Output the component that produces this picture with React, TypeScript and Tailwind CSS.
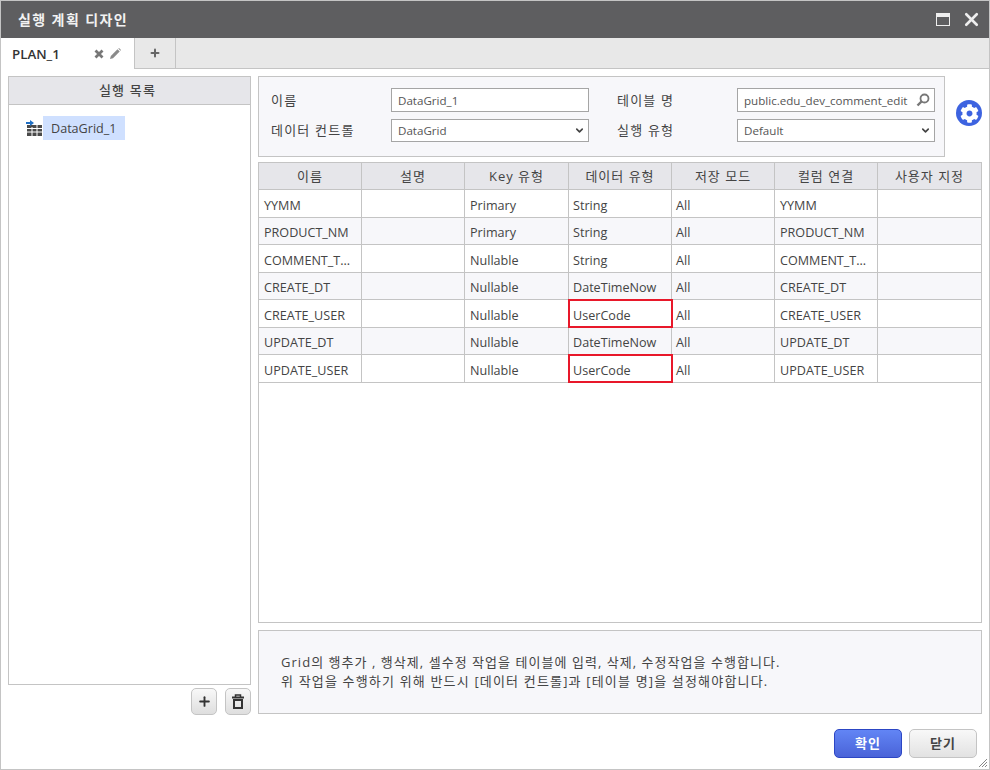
import React from "react";
import { Plus, X, ChevronDown } from "lucide-react";
import { FaCog } from "react-icons/fa";

const FONT = "font-['Open_Sans','Noto_Sans_CJK_KR',sans-serif]";

const columns = ["이름", "설명", "Key 유형", "데이터 유형", "저장 모드", "컬럼 연결", "사용자 지정"];

const rows = [
  { name: "YYMM", key: "Primary", type: "String", col: "YYMM" },
  { name: "PRODUCT_NM", key: "Primary", type: "String", col: "PRODUCT_NM" },
  { name: "COMMENT_T...", key: "Nullable", type: "String", col: "COMMENT_T..." },
  { name: "CREATE_DT", key: "Nullable", type: "DateTimeNow", col: "CREATE_DT" },
  { name: "CREATE_USER", key: "Nullable", type: "UserCode", col: "CREATE_USER", mark: true },
  { name: "UPDATE_DT", key: "Nullable", type: "DateTimeNow", col: "UPDATE_DT" },
  { name: "UPDATE_USER", key: "Nullable", type: "UserCode", col: "UPDATE_USER", mark: true },
];

const GridIcon = () => (
  <svg width="17" height="16" viewBox="0 0 17 16" className="shrink-0">
    <rect x="1" y="5" width="15" height="11" fill="#4a4a4a" />
    <path d="M1 8.500h15M1 12h15M6 7v9M11 5v11" stroke="#fff" strokeWidth="1" />
    <path d="M0 3h5" stroke="#1f6fc4" strokeWidth="2" />
    <path d="M4 0l4 3-4 3z" fill="#1f6fc4" />
  </svg>
);

// 돋보기: lens upper right, handle lower left
const LensIcon = () => (
  <svg width="14" height="14" viewBox="0 0 14 14" fill="none" className="shrink-0">
    <circle cx="8.500" cy="5.500" r="4" stroke="#777" strokeWidth="1.800" />
    <path d="M5.500 8.500L1.500 12.500" stroke="#777" strokeWidth="2.400" />
  </svg>
);

const TabClose = () => (
  <svg width="10" height="10" viewBox="0 0 10 10">
    <path d="M1.500 1.500l7 7M8.500 1.500l-7 7" stroke="#777" strokeWidth="2.800" />
  </svg>
);

const TabPencil = () => (
  <svg width="11" height="11" viewBox="0 0 11 11">
    <path d="M0 11l.8-3L7.500 1.300l2.200 2.200L3 10.200z" fill="#8a8a8a" />
    <path d="M8.300.5l.7-.5 2 2-.5.700z" fill="#8a8a8a" />
  </svg>
);

const TrashIcon = () => (
  <svg width="14" height="15" viewBox="0 0 14 15" fill="none">
    <path d="M1 3.500h12" stroke="#333" strokeWidth="2" />
    <path d="M4.500 3V1h5v2" stroke="#333" strokeWidth="1.500" />
    <rect x="3" y="6" width="8" height="8" stroke="#333" strokeWidth="2" />
  </svg>
);

const SelectBox = ({ value }: { value: string }) => (
  <div className="h-[23px] bg-white border border-[#a5a5a5] flex items-center justify-between pl-[6px] pr-[3px] text-[11.600px] text-[#555]">
    <span className="pt-[1px]">{value}</span>
    <ChevronDown size={11} strokeWidth={3.500} className="text-[#444]" />
  </div>
);

const Label = ({ children }: { children: React.ReactNode }) => (
  <span className="text-[13px] tracking-[1.200px] pt-[1px]">{children}</span>
);

export default function App() {
  return (
    <div className={`${FONT} w-[990px] h-[770px] bg-white border border-[#c4c4c4] flex flex-col overflow-hidden relative text-[#444]`}>
      {/* title bar */}
      <div className="h-[37px] bg-[#5e5e60] flex items-center justify-between pl-[17px] pr-[7px] shrink-0">
        <span className="text-sm font-bold text-[#f2f2f2] tracking-[1.400px]">실행 계획 디자인</span>
        <div className="flex items-center gap-[11px]">
          <div className="w-[14px] h-[13px] border border-[#eee] border-t-[4px]" />
          <X size={21} strokeWidth={3} className="text-[#eee]" />
        </div>
      </div>

      {/* tabs */}
      <div className="h-[31px] bg-[#e8e8e8] border-b border-[#c4c4c4] flex shrink-0">
        <div className="w-[134px] h-[31px] bg-white border-r border-[#c4c4c4] flex items-center pl-[11px] pr-[13px] justify-between">
          <span className="text-[13.300px] font-semibold text-[#333] pt-[2px]">PLAN_1</span>
          <div className="flex items-center gap-[6px]">
            <TabClose />
            <TabPencil />
          </div>
        </div>
        <div className="w-[41px] border-r border-[#c4c4c4] flex items-center justify-center">
          <Plus size={12} strokeWidth={4} className="text-[#666]" />
        </div>
      </div>

      {/* body */}
      <div className="flex gap-[7px] pl-[7px] pr-[7px] pt-[7px] flex-1 min-h-0">
        {/* left column */}
        <div className="w-[243px] shrink-0 flex flex-col">
          <div className="h-[609px] border border-[#c4c4c4] flex flex-col">
            <div className="h-[28px] bg-[#e6e6ea] border-b border-[#c4c4c4] flex items-center justify-center pr-[4px] text-[13px] font-medium text-[#444] tracking-[1.200px]">
              실행 목록
            </div>
            <div className="pl-[17px] pt-[11px] flex items-center">
              <GridIcon />
              <div className="h-[24px] w-[82px] bg-[#cfe0ff] flex items-center pl-[8px] pt-[3px] text-[12.600px] text-[#444]">DataGrid_1</div>
            </div>
          </div>
          <div className="flex justify-end gap-[8px] pt-[3px]">
            <div className="w-[26px] h-[27px] rounded-[5px] border border-[#c4c4c4] bg-gradient-to-b from-[#f8f8f8] to-[#dedede] flex items-center justify-center">
              <Plus size={15} strokeWidth={3} className="text-[#333]" />
            </div>
            <div className="w-[26px] h-[27px] rounded-[5px] border border-[#c4c4c4] bg-gradient-to-b from-[#f8f8f8] to-[#dedede] flex items-center justify-center">
              <TrashIcon />
            </div>
          </div>
        </div>

        {/* right column */}
        <div className="w-[724px] shrink-0 flex flex-col">
          <div className="flex items-center">
            <div className="w-[687px] h-[81px] bg-[#f7f7fa] border border-[#c4c4c4] pl-[12px] pt-[11px] grid grid-cols-[120px_198px_28px_120px_198px] grid-rows-[24px_23px] gap-y-[7px] items-center text-[#444]">
              <Label>이름</Label>
              <div className="h-[24px] bg-white border border-[#a5a5a5] flex items-center pl-[6px] text-[11.600px] text-[#555]">
                <span className="pt-[1px]">DataGrid_1</span>
              </div>
              <span />
              <Label>테이블 명</Label>
              <div className="h-[24px] bg-white border border-[#a5a5a5] flex items-center justify-between pl-[6px] pr-[4px] text-[11.600px] text-[#555]">
                <span className="pt-[1px]">public.edu_dev_comment_edit</span>
                <LensIcon />
              </div>
              <Label>데이터 컨트롤</Label>
              <SelectBox value="DataGrid" />
              <span />
              <Label>실행 유형</Label>
              <SelectBox value="Default" />
            </div>
            <div className="flex-1 flex justify-end mb-[7px]">
              <div className="w-[26px] h-[26px] rounded-full bg-[#3d63e0] flex items-center justify-center">
                <FaCog size={19} className="text-white" />
              </div>
            </div>
          </div>

          {/* grid */}
          <div className="mt-[5px] h-[461px] border border-[#c4c4c4] shrink-0">
            <div className="grid grid-cols-[103px_103px_104px_103px_103px_103px_103px] h-[27px] bg-[#e6e6ea] border-b border-[#c4c4c4]">
              {columns.map((c, i) => (
                <div key={c} className={`flex items-center justify-center pt-[1px] text-[13px] text-[#444] tracking-[1px] ${i < 6 ? "border-r border-[#c4c4c4]" : ""}`}>
                  {c}
                </div>
              ))}
            </div>
            {rows.map((r, i) => {
              const h = i % 2 === 0 ? "h-[28px]" : "h-[27px]";
              const bg = i % 2 === 1 ? "bg-[#f7f7fa]" : "bg-white";
              const cell = "flex items-center pt-[5px] text-[12.600px] text-[#444] border-r border-[#c4c4c4] whitespace-nowrap overflow-hidden";
              return (
                <div key={r.name} className={`grid grid-cols-[103px_103px_104px_103px_103px_103px_103px] border-b border-[#c4c4c4] ${h} ${bg}`}>
                  <div className={`${cell} pl-[5px]`}>{r.name}</div>
                  <div className={cell} />
                  <div className={`${cell} pl-[5px]`}>{r.key}</div>
                  <div className={`${cell} pl-[4px] ${r.mark ? "outline-2 -outline-offset-1 outline-[#e8182a] overflow-visible" : ""}`}>{r.type}</div>
                  <div className={`${cell} pl-[4px]`}>All</div>
                  <div className={`${cell} pl-[5px]`}>{r.col}</div>
                  <div className="" />
                </div>
              );
            })}
          </div>

          {/* description */}
          <div className="mt-[7px] h-[84px] bg-[#f7f7fa] border border-[#c4c4c4] flex flex-col justify-center pl-[22px] text-[13px] leading-[19px] text-[#444]">
            <span className="tracking-[1.040px]">Grid의 행추가 , 행삭제, 셀수정 작업을 테이블에 입력, 삭제, 수정작업을 수행합니다.</span>
            <span className="tracking-[1.170px]">위 작업을 수행하기 위해 반드시 [데이터 컨트롤]과 [테이블 명]을 설정해야합니다.</span>
          </div>

          {/* footer */}
          <div className="flex justify-end gap-[7px] mt-[15px] pr-[5px]">
            <button className="w-[68px] h-[29px] rounded-[5px] border border-[#2c46c4] bg-gradient-to-b from-[#6285f5] to-[#4a63d8] text-[13px] font-bold tracking-[1px] text-white">확인</button>
            <button className="w-[68px] h-[29px] rounded-[5px] border border-[#c4c4c4] bg-gradient-to-b from-[#f8f8f8] to-[#e2e2e2] text-[13px] font-bold tracking-[1px] text-[#444]">닫기</button>
          </div>
        </div>
      </div>

      {/* resize grip */}
      <svg width="10" height="10" viewBox="0 0 10 10" className="absolute right-[1px] bottom-[1px]">
        <path d="M9 1L1 9M9 4L4 9M9 7L7 9" stroke="#888" strokeWidth="1" />
      </svg>
    </div>
  );
}
